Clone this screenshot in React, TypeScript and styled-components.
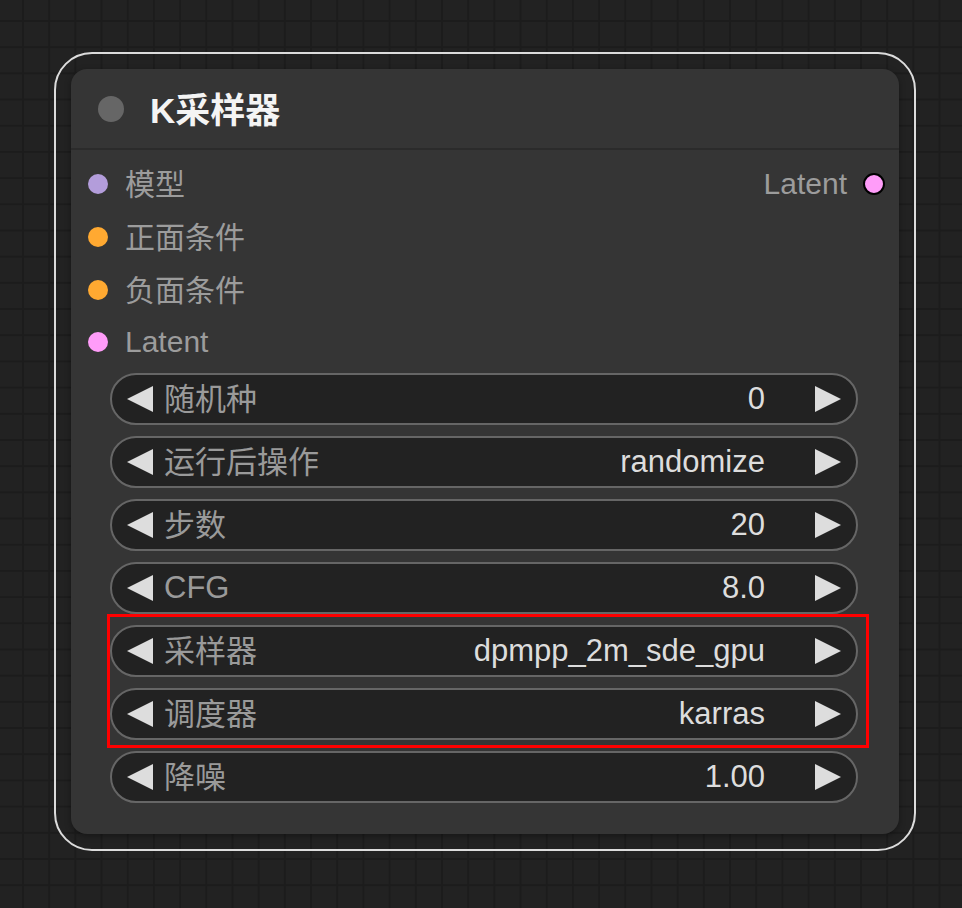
import styled, { createGlobalStyle } from "styled-components";

const GlobalStyle = createGlobalStyle`
  html, body {
    margin: 0;
    padding: 0;
    background-color: #222222;
  }
  body {
    min-height: 908px;
    font-family: "Liberation Sans", "Noto Sans CJK SC", sans-serif;
    background-image:
      linear-gradient(to right, #1c1c1c 0, #1c1c1c 2px, transparent 2px),
      linear-gradient(to bottom, #1c1c1c 0, #1c1c1c 2px, transparent 2px);
    background-size: 26.2px 26.2px;
    background-position: 22px 20px;
  }
`;

const hasCjk = (s: string) => /[\u4e00-\u9fff]/.test(s);

const Canvas = styled.div`
  padding: 52px 0 0 54px;
`;

const Selection = styled.div`
  width: 828px;
  padding: 15px;
  border: 2px solid #dcdcdc;
  border-radius: 38px;
`;

const Node = styled.div`
  background: #353535;
  border-radius: 16px;
  box-shadow: 0 2px 6px rgba(0, 0, 0, 0.35);
  padding-bottom: 31px;
`;

const Header = styled.div`
  height: 79px;
  display: flex;
  align-items: center;
  padding-left: 27px;
  gap: 26px;
  border-bottom: 2px solid #2b2b2b;
`;

const StatusDot = styled.span`
  width: 26px;
  height: 26px;
  border-radius: 50%;
  background: #666666;
`;

const Title = styled.h1`
  margin: 0 0 2px;
  font-size: 35px;
  font-weight: 600;
  color: #f4f4f4;
`;

const Slots = styled.div`
  padding: 8px 14px 4px 17px;
`;

const SlotRow = styled.div`
  height: 52.7px;
  display: flex;
  align-items: center;
  justify-content: space-between;
`;

const Slot = styled.div<{ $out?: boolean }>`
  display: flex;
  align-items: center;
  gap: ${(p) => (p.$out ? "16px" : "17px")};
  font-size: 30px;
  color: #9c9c9c;
`;

const SlotText = styled.span<{ $cjk?: boolean }>`
  padding-bottom: ${(p) => (p.$cjk ? "4px" : "1px")};
`;

const Dot = styled.span<{ $color: string; $out?: boolean }>`
  width: ${(p) => (p.$out ? "18px" : "20px")};
  height: ${(p) => (p.$out ? "18px" : "20px")};
  border-radius: 50%;
  background: ${(p) => p.$color};
  border: ${(p) => (p.$out ? "2px solid #000" : "none")};
`;

const Widgets = styled.div`
  display: flex;
  flex-direction: column;
  gap: 11px;
  padding: 0 41px 0 39px;
`;

const Highlight = styled.div`
  position: relative;
  display: flex;
  flex-direction: column;
  gap: 11px;
`;

const HighlightFrame = styled.div`
  position: absolute;
  top: -11px;
  left: -3px;
  right: -11px;
  bottom: -8px;
  border: 3px solid #ff0000;
  pointer-events: none;
`;

const Widget = styled.div`
  box-sizing: border-box;
  height: 52px;
  display: flex;
  align-items: center;
  padding: 0 15px;
  background: #222222;
  border: 2px solid #666666;
  border-radius: 26px;
  font-size: 31px;
`;

const Label = styled.span<{ $cjk?: boolean }>`
  flex: 1;
  margin-left: 11px;
  padding-bottom: ${(p) => (p.$cjk ? "4px" : "0")};
  color: #9a9a9a;
`;

const Value = styled.span`
  margin-right: 50px;
  color: #dddddd;
`;

const Arrow = ({ dir }: { dir: "left" | "right" }) => (
  <svg width="26" height="26" viewBox="0 0 26 26" style={{ flexShrink: 0 }}>
    {dir === "left" ? (
      <polygon points="26,0 26,26 0,13" fill="#dddddd" />
    ) : (
      <polygon points="0,0 0,26 26,13" fill="#dddddd" />
    )}
  </svg>
);

function Field({ label, value }: { label: string; value: string }) {
  return (
    <Widget>
      <Arrow dir="left" />
      <Label $cjk={hasCjk(label)}>{label}</Label>
      <Value>{value}</Value>
      <Arrow dir="right" />
    </Widget>
  );
}

const inputs = [
  { name: "模型", color: "#b39ddb" },
  { name: "正面条件", color: "#ffa931" },
  { name: "负面条件", color: "#ffa931" },
  { name: "Latent", color: "#ff9cf9" },
];

export default function App() {
  return (
    <>
      <GlobalStyle />
      <Canvas>
        <Selection>
          <Node>
            <Header>
              <StatusDot />
              <Title>K采样器</Title>
            </Header>
            <Slots>
              {inputs.map((input, i) => (
                <SlotRow key={input.name}>
                  <Slot>
                    <Dot $color={input.color} />
                    <SlotText $cjk={hasCjk(input.name)}>{input.name}</SlotText>
                  </Slot>
                  {i === 0 && (
                    <Slot $out>
                      <SlotText>Latent</SlotText>
                      <Dot $color="#ff9cf9" $out />
                    </Slot>
                  )}
                </SlotRow>
              ))}
            </Slots>
            <Widgets>
              <Field label="随机种" value="0" />
              <Field label="运行后操作" value="randomize" />
              <Field label="步数" value="20" />
              <Field label="CFG" value="8.0" />
              <Highlight>
                <HighlightFrame />
                <Field label="采样器" value="dpmpp_2m_sde_gpu" />
                <Field label="调度器" value="karras" />
              </Highlight>
              <Field label="降噪" value="1.00" />
            </Widgets>
          </Node>
        </Selection>
      </Canvas>
    </>
  );
}
